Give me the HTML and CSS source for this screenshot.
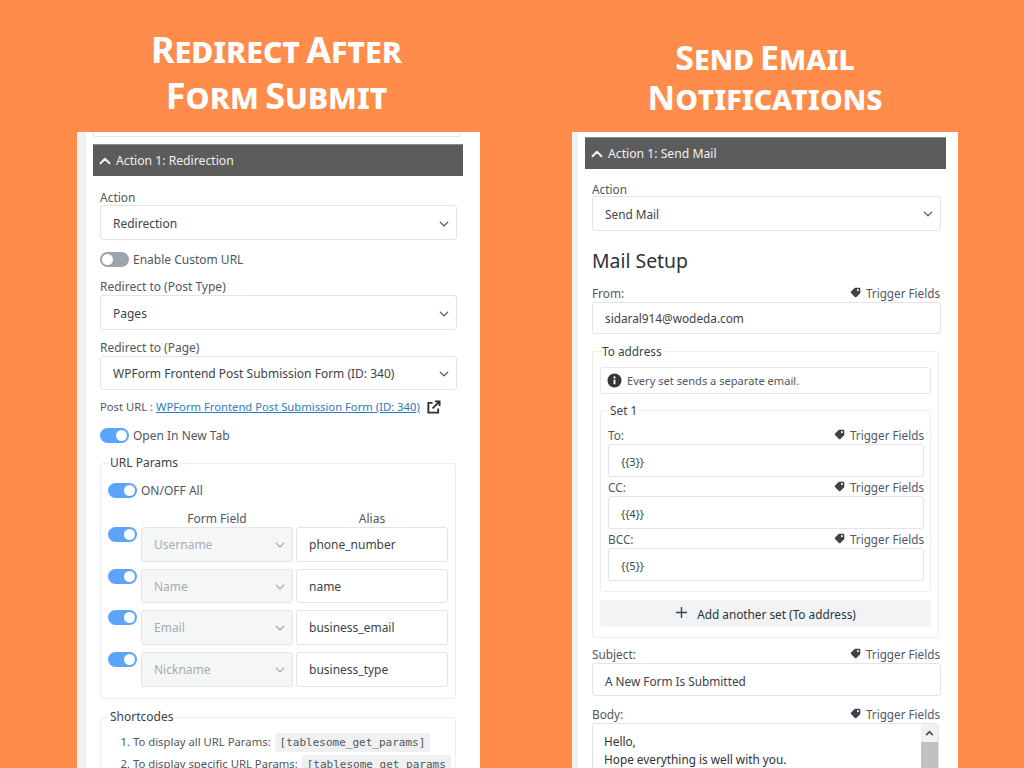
FILE: index.html
```html
<!DOCTYPE html>
<html lang="en">
<head>
<meta charset="utf-8">
<title>Redirect and Email</title>
<link rel="stylesheet" href="styles.css">
</head>
<body>
<svg class="defs" width="0" height="0" aria-hidden="true">
  <symbol id="chev" viewBox="0 0 16 16"><path d="M2 5l6 6 6-6" fill="none" stroke="currentColor" stroke-width="2.200" stroke-linecap="round" stroke-linejoin="round"/></symbol>
  <symbol id="tag" viewBox="0 0 16 16"><path d="M1 8.200V2.600C1 1.700 1.700 1 2.600 1h5.600c.4 0 .8.2 1.100.5l5.200 5.200c.6.6.6 1.600 0 2.200l-5.600 5.600c-.6.6-1.600.6-2.200 0L1.500 9.300C1.200 9 1 8.600 1 8.200zM4.500 6a1.500 1.500 0 1 0 0-3 1.500 1.500 0 0 0 0 3z" fill="currentColor" fill-rule="evenodd"/></symbol>
</svg>

<section class="col col-left">
  <h1 class="title title-left">Redirect After<br>Form Submit</h1>
  <div class="panel panel-left">
    <div class="prev-field"></div>
    <div class="bar bar-left">
      <svg class="bar-chev" viewBox="0 0 16 16"><path d="M2 11l6-6 6 6" fill="none" stroke="currentColor" stroke-width="2.600" stroke-linecap="round" stroke-linejoin="round"/></svg>
      <span>Action 1: Redirection</span>
    </div>
    <div class="body-left">
      <div class="lbl lbl-action">Action</div>
      <div class="ctl sel">Redirection<svg class="chev"><use href="#chev"/></svg></div>
      <div class="tog-row tr-custom"><span class="tog off"></span>Enable Custom URL</div>
      <div class="lbl lbl-b">Redirect to (Post Type)</div>
      <div class="ctl sel">Pages<svg class="chev"><use href="#chev"/></svg></div>
      <div class="lbl lbl-c">Redirect to (Page)</div>
      <div class="ctl sel ctl-34">WPForm Frontend Post Submission Form (ID: 340)<svg class="chev"><use href="#chev"/></svg></div>
      <div class="post-url"><span class="post-text">Post URL : <a href="#">WPForm Frontend Post Submission Form (ID: 340)</a></span>
        <svg class="ext" viewBox="0 0 16 16"><path d="M7 3H2.500v10.500H13V9" fill="none" stroke="currentColor" stroke-width="2"/><path d="M9.500 1.500h5v5M14.500 1.500L7 9" fill="none" stroke="currentColor" stroke-width="2"/></svg>
      </div>
      <div class="tog-row tr-newtab"><span class="tog"></span>Open In New Tab</div>
      <fieldset class="fs fs-params">
        <legend>URL Params</legend>
        <div class="tog-row tr-all"><span class="tog"></span>ON/OFF All</div>
        <div class="param-head"><span>Form Field</span><span>Alias</span></div>
        <div class="param"><span class="tog"></span><div class="ctl sel dis">Username<svg class="chev"><use href="#chev"/></svg></div><div class="ctl">phone_number</div></div>
        <div class="param p2"><span class="tog"></span><div class="ctl sel dis">Name<svg class="chev"><use href="#chev"/></svg></div><div class="ctl">name</div></div>
        <div class="param p3"><span class="tog"></span><div class="ctl sel dis">Email<svg class="chev"><use href="#chev"/></svg></div><div class="ctl">business_email</div></div>
        <div class="param p3"><span class="tog"></span><div class="ctl sel dis">Nickname<svg class="chev"><use href="#chev"/></svg></div><div class="ctl">business_type</div></div>
      </fieldset>
      <fieldset class="fs fs-short">
        <legend>Shortcodes</legend>
        <ol class="codes">
          <li>To display all URL Params: <code>[tablesome_get_params]</code></li>
          <li>To display specific URL Params: <code>[tablesome_get_params</code></li>
        </ol>
      </fieldset>
    </div>
  </div>
</section>

<section class="col col-right">
  <h1 class="title title-right">Send Email<br>Notifications</h1>
  <div class="panel panel-right">
    <div class="bar bar-right">
      <svg class="bar-chev" viewBox="0 0 16 16"><path d="M2 11l6-6 6 6" fill="none" stroke="currentColor" stroke-width="2.600" stroke-linecap="round" stroke-linejoin="round"/></svg>
      <span>Action 1: Send Mail</span>
    </div>
    <div class="body-right">
      <div class="lbl lbl-r-action">Action</div>
      <div class="ctl sel">Send Mail<svg class="chev"><use href="#chev"/></svg></div>
      <h2 class="setup">Mail Setup</h2>
      <div class="lbl-row lr-from"><span>From:</span><span class="trig"><svg class="tag"><use href="#tag"/></svg>Trigger Fields</span></div>
      <div class="ctl ctl-r ctl-from">sidaral914@wodeda.com</div>
      <fieldset class="fs fs-to">
        <legend>To address</legend>
        <div class="alert">
          <svg class="info" viewBox="0 0 16 16"><circle cx="8" cy="8" r="7.500" fill="currentColor"/><rect x="7" y="7" width="2" height="5" fill="#fff"/><circle cx="8" cy="4.700" r="1.200" fill="#fff"/></svg>
          Every set sends a separate email.
        </div>
        <fieldset class="fs fs-set">
          <legend>Set 1</legend>
          <div class="lbl-row lr-set lr-first"><span>To:</span><span class="trig"><svg class="tag"><use href="#tag"/></svg>Trigger Fields</span></div>
          <div class="ctl ctl-r ctl-s">{{3}}</div>
          <div class="lbl-row lr-set"><span>CC:</span><span class="trig"><svg class="tag"><use href="#tag"/></svg>Trigger Fields</span></div>
          <div class="ctl ctl-r ctl-s">{{4}}</div>
          <div class="lbl-row lr-set"><span>BCC:</span><span class="trig"><svg class="tag"><use href="#tag"/></svg>Trigger Fields</span></div>
          <div class="ctl ctl-r ctl-s">{{5}}</div>
        </fieldset>
        <div class="add"><svg class="plus" viewBox="0 0 14 14"><path d="M7 1v12M1 7h12" fill="none" stroke="currentColor" stroke-width="1.500"/></svg>Add another set (To address)</div>
      </fieldset>
      <div class="lbl-row lr-subject"><span>Subject:</span><span class="trig"><svg class="tag"><use href="#tag"/></svg>Trigger Fields</span></div>
      <div class="ctl ctl-r ctl-subject">A New Form Is Submitted</div>
      <div class="lbl-row lr-body"><span>Body:</span><span class="trig"><svg class="tag"><use href="#tag"/></svg>Trigger Fields</span></div>
      <div class="area">
        <div class="area-text">Hello,<br>Hope everything is well with you.</div>
        <div class="scroll">
          <div class="scroll-btn"><svg class="scroll-up" viewBox="0 0 16 16"><path d="M2 11l6-6 6 6" fill="none" stroke="currentColor" stroke-width="3"/></svg></div>
          <div class="scroll-thumb"></div>
        </div>
      </div>
    </div>
  </div>
</section>
</body>
</html>
```
FILE: styles.css
```css
* { box-sizing: border-box; }
html, body { height: 768px; margin: 0; overflow: hidden; }
body {
  background: #ff8c4b;
  display: flex;
  padding-left: 77px;
  gap: 92px;
  font-family: "Noto Sans", "Open Sans", sans-serif;
  font-size: 12px;
  line-height: 18px;
  color: #3c434a;
}
.defs { position: absolute; }
.col { display: flex; flex-direction: column; height: 768px; }
.col-left { width: 403px; }
.col-right { width: 386px; }
.title {
  height: 132px;
  margin: 0;
  color: #fff;
  text-align: center;
  font-family: "Noto Sans", sans-serif;
  font-weight: 700;
  font-variant: small-caps;
}
.title-left { padding: 27px 4px 0 0; font-size: 36px; line-height: 46px; word-spacing: -3px; }
.title-right { padding-top: 37px; font-size: 34px; line-height: 40px; word-spacing: -3px; }
.panel { flex: 1; background: #fff; overflow: hidden; position: relative; }
.panel-left { border-left: 9px solid #f1f1f1; border-right: 7px solid #fff; }
.panel-right { border-left: 6px solid #f1f1f1; padding-top: 5px; }
.prev-field {
  height: 5px;
  margin: 0 0 0 7px;
  width: 368px;
  border: 1px solid #e3e5e9;
  border-top: 0;
  border-radius: 0 0 3px 3px;
}
.bar {
  display: flex;
  align-items: center;
  height: 32px;
  background: #5c5c5c;
  border-top: 1px solid #8a8a8a;
  color: #f1f1f1;
  font-size: 12.2px;
}
.bar-left { margin: 7px 0 0 7px; width: 370px; padding: 1px 0 0 6px; }
.bar-right { margin-left: 7px; width: 361px; padding-left: 6px; height: 32px; }
.bar-chev { width: 12px; height: 12px; margin-right: 5px; }
.body-left { margin-left: 14px; width: 357px; }
.body-right { margin-left: 14px; width: 349px; font-size: 11.8px; }
.lbl { line-height: 18px; color: #50575e; }
.lbl-action { margin-top: 13px; height: 16px; }
.lbl-b { margin-top: 10px; height: 17px; }
.lbl-c { margin-top: 9px; height: 17px; }
.lbl-r-action { margin-top: 11px; height: 16px; }
.ctl {
  display: flex;
  align-items: center;
  justify-content: space-between;
  height: 35px;
  padding: 1px 7px 0 12px;
  background: #fff;
  border: 1px solid #e2e4e9;
  border-radius: 3px;
  color: #3c434a;
  white-space: nowrap;
}
.body-left > .ctl { padding-top: 2px; }
.body-left > .ctl-34 { height: 34px; padding-top: 1px; }
.chev { width: 10px; height: 10px; color: #50575e; flex: none; }
.tog-row { display: flex; align-items: center; gap: 4px; height: 18px; padding-top: 1px; color: #50575e; }
.tog-row .tog { margin-top: -1px; }
.tr-custom { margin-top: 10px; }
.tr-newtab { margin-top: 10px; }
.tr-all { margin-top: 9px; }
.tog {
  position: relative;
  display: block;
  flex: none;
  width: 29px;
  height: 15px;
  border-radius: 8px;
  background: #5ba3fb;
}
.tog::after {
  content: "";
  position: absolute;
  top: 2px;
  right: 2px;
  width: 11px;
  height: 11px;
  border-radius: 50%;
  background: #fff;
}
.tog.off { background: #9ca3ad; }
.tog.off::after { right: auto; left: 2px; }
.post-url { display: flex; align-items: center; margin-top: 8px; height: 18px; font-size: 11.25px; color: #50575e; white-space: nowrap; }
.post-url a { color: #2a7cb8; }
.ext { width: 15px; height: 15px; color: #2f2f2f; margin-left: 6px; flex: none; }
.fs {
  margin: 0;
  min-width: 0;
  border: 1px solid #eceef1;
  border-radius: 3px;
}
.fs legend { padding: 0 3px 0 1px; line-height: 18px; color: #3c434a; }
.fs-params { margin-top: 10px; width: 356px; height: 245px; padding: 0 7px; }
.fs-params legend { margin-left: 1px; }
.param-head { display: flex; gap: 3px; margin: 11px 0 0 33px; height: 17px; line-height: 18px; color: #50575e; }
.param-head span { width: 152px; text-align: center; }
.param { display: grid; grid-template-columns: 30px 152px 152px; column-gap: 3px; height: 35px; align-items: start; }
.param .ctl { height: 100%; }
.param.p2 { margin-top: 7px; height: 34px; }
.param.p3 { margin-top: 7px; }
.dis { background: #f5f6f6; color: #a7acb1; }
.dis .chev { color: #a0a5aa; }
.fs-short { margin-top: 9px; width: 356px; height: 90px; padding: 0 7px; font-size: 11.3px; }
.fs-short legend { margin-left: 1px; font-size: 12px; }
.codes { margin: 5px 0 0; padding: 0 0 0 25px; color: #50575e; }
.codes li { height: 22px; line-height: 22px; white-space: nowrap; }
code {
  font-family: "DejaVu Sans Mono", monospace;
  font-size: 11px;
  color: #50575e;
  background: #f0f0f1;
  padding: 3px 5px;
  margin-left: 1px;
}
.setup { margin: 15px 0 0; height: 30px; font-size: 19.4px; font-weight: 400; line-height: 30px; color: #2c3338; }
.lbl-row { display: flex; justify-content: space-between; align-items: flex-end; height: 18px; color: #50575e; }
.lr-from { margin-top: 8px; padding-right: 1px; }
.lr-set { height: 19px; }
.lr-first { margin-top: 6px; }
.trig { display: flex; align-items: center; gap: 5px; font-size: 11.7px; }
.tag { width: 11px; height: 11px; color: #3c434a; transform: scaleX(-1); margin-top: -2px; }
.ctl-r { height: 33px; }
.ctl-from { height: 32px; padding-top: 0; }
.fs-to { margin-top: 8px; width: 347px; height: 296px; padding: 0 7px; }
.fs-to > legend { margin-left: 1px; }
.alert {
  display: flex;
  align-items: center;
  gap: 5px;
  height: 27px;
  margin-top: 7px;
  padding-left: 6px;
  border: 1px solid #e6e8ec;
  border-radius: 3px;
  font-size: 11.1px;
  color: #50575e;
}
.info { width: 15px; height: 15px; color: #32373c; }
.fs-set { margin-top: 7px; height: 191px; padding: 0 6px 0 7px; }
.fs-set legend { margin-left: 1px; }
.ctl-s { font-size: 11px; padding-top: 2px; }
.ctl-subject { padding-top: 2px; }
.add {
  display: flex;
  align-items: center;
  justify-content: center;
  gap: 9px;
  height: 27px;
  margin-top: 8px;
  background: #f2f3f5;
  border-radius: 3px;
  color: #2c3338;
}
.plus { width: 13px; height: 13px; color: #3c434a; margin-top: -2px; }
.lr-subject { margin-top: 7px; padding-right: 1px; }
.lr-body { margin-top: 9px; padding-right: 1px; }
.area {
  display: flex;
  justify-content: space-between;
  width: 347px;
  height: 60px;
  border: 1px solid #e2e4e9;
  border-radius: 3px;
  color: #2c3338;
}
.area-text { padding: 8px 0 0 11px; }
.scroll { width: 17px; flex: none; }
.scroll-btn { display: flex; align-items: center; justify-content: center; height: 18px; background: #f1f1f1; }
.scroll-up { width: 9px; height: 9px; color: #505050; }
.scroll-thumb { height: 50px; background: #c1c1c1; }
```
